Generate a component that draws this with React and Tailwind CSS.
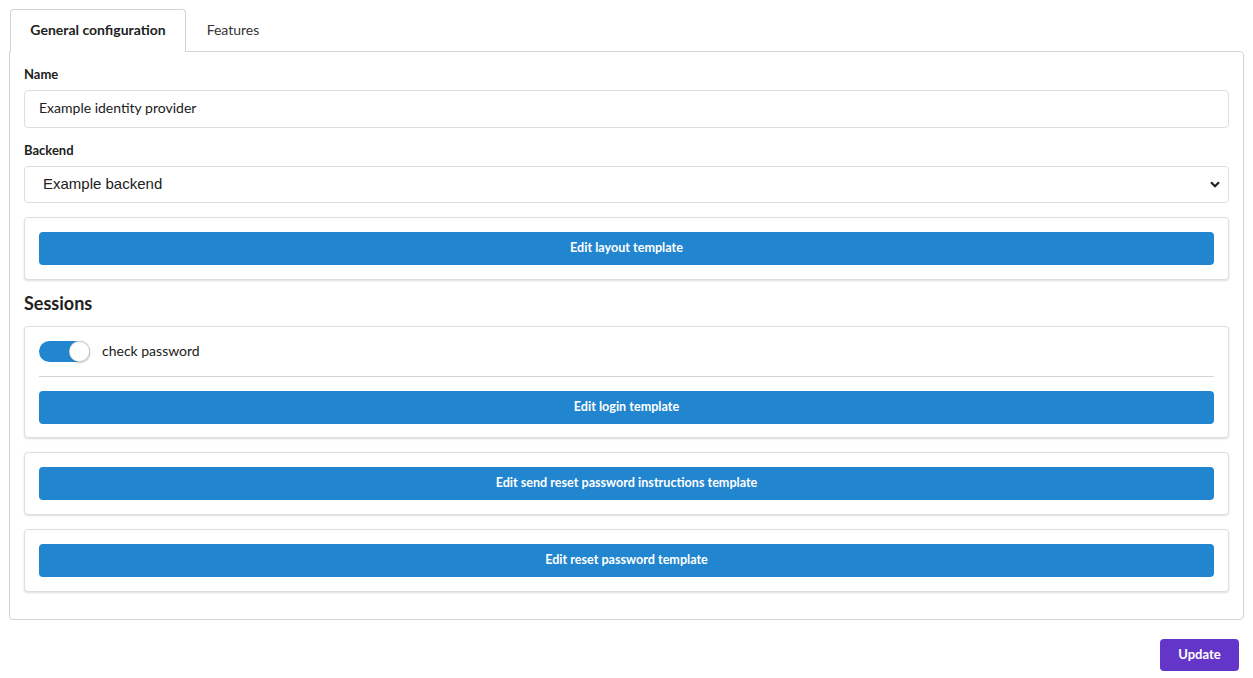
import React from "react";

function TemplateButton({ children }) {
  return (
    <button className="w-full h-[33px] rounded-[4px] bg-[#2185d0] text-white text-[12.6px] font-bold">
      {children}
    </button>
  );
}

function Segment({ children, className = "" }) {
  return (
    <div className={`border border-[#dedede] rounded-[4px] shadow-[0_1px_2px_0_rgba(34,36,38,0.15)] bg-white p-[14px] ${className}`}>
      {children}
    </div>
  );
}

export default function App() {
  return (
    <div className="bg-white w-[1253px] h-[678px] text-[#212121]" style={{ fontFamily: "Lato, 'Open Sans', sans-serif" }}>
      <div className="pt-[9px] pl-[9px] pr-[9px]">
        <div className="flex pl-[1px] relative z-10">
          <div className="h-[43px] w-[176px] border border-b-0 border-[#d4d4d5] rounded-t-[4px] bg-white flex items-center justify-center text-[14px] font-bold pb-[3px]">
            General configuration
          </div>
          <div className="h-[42px] w-[94px] flex items-center justify-center text-[14px] text-[#333] pb-[2px]">
            Features
          </div>
        </div>
        <div className="-mt-[1px] border border-[#d4d4d5] rounded-b-[4px] rounded-tr-[4px] px-[14px] pt-[13px] h-[569px]">
          <div className="text-[13px] font-bold leading-[18px] mb-[7px]">Name</div>
          <div className="h-[38px] border border-[#dedede] rounded-[4px] flex items-center px-[14px] pb-[3px] text-[14px]">
            Example identity provider
          </div>
          <div className="text-[13px] font-bold leading-[18px] mt-[13px] mb-[7px]">Backend</div>
          <div className="h-[37px] border border-[#dedede] rounded-[4px] flex items-center pl-[18px] pr-[8px] text-[15px] justify-between" style={{ fontFamily: "'Liberation Sans', Arial, sans-serif" }}>
            <span>Example backend</span>
            <svg width="10" height="7" viewBox="0 0 10 7"><path d="M1 1.2 L5 5.2 L9 1.2" stroke="#222" strokeWidth="2.2" fill="none" /></svg>
          </div>
          <Segment className="mt-[14px]">
            <TemplateButton>Edit layout template</TemplateButton>
          </Segment>
          <div className="text-[18px] font-bold leading-[24px] mt-[11px] mb-[11px]">Sessions</div>
          <Segment>
            <div className="flex items-center h-[21px]">
              <div className="relative w-[51px] h-[21px] rounded-full bg-[#2185d0]">
                <div className="absolute right-0 top-0 w-[21px] h-[21px] rounded-full bg-white shadow-[0_1px_2px_0_rgba(34,36,38,0.25),0_0_0_1px_rgba(34,36,38,0.15)_inset]" />
              </div>
              <span className="ml-[12px] text-[14px] mb-[3px]">check password</span>
            </div>
            <div className="border-t border-[#d4d4d5] mt-[14px] mb-[14px]" />
            <div className="-mb-[1px]">
              <TemplateButton>Edit login template</TemplateButton>
            </div>
          </Segment>
          <Segment className="mt-[14px]">
            <TemplateButton>Edit send reset password instructions template</TemplateButton>
          </Segment>
          <Segment className="mt-[14px]">
            <TemplateButton>Edit reset password template</TemplateButton>
          </Segment>
        </div>
        <div className="flex justify-end mt-[19px] pr-[5px]">
          <button className="w-[79px] h-[32px] rounded-[4px] bg-[#6435c9] text-white text-[13px] font-bold">Update</button>
        </div>
      </div>
    </div>
  );
}
